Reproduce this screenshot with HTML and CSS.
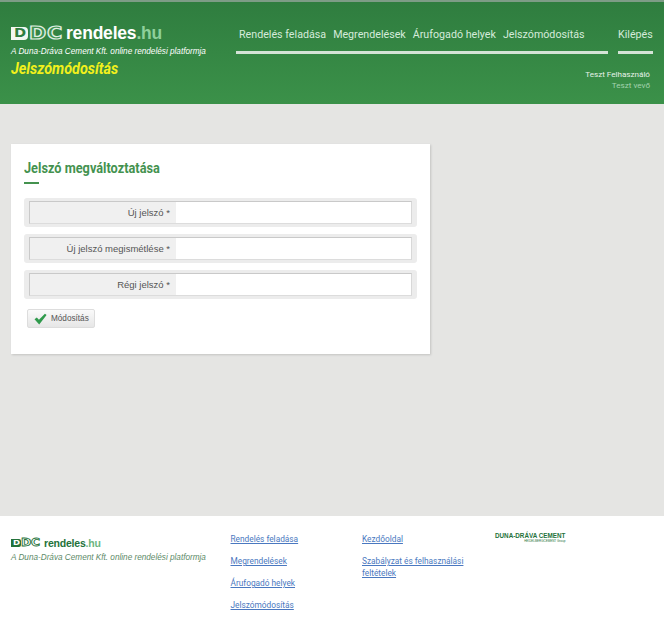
FILE: index.html
```html
<!DOCTYPE html>
<html lang="en">
  <head>
    <meta charset="UTF-8" />
    <meta name="viewport" content="width=device-width, initial-scale=1.0" />
    <title>Jelszómódosítás</title>
    <link rel="stylesheet" href="styles.css">
  </head>
  <body>
    <div class="header">
      <div class="brand">
        <div class="logo">
          <span class="ddc"><span class="ddc-first"><span class="wide">D</span></span><span class="ddc-line wide">D</span><span class="ddc-line wide">C</span></span>
          <span class="logo-name">rendeles<span class="logo-tld">.hu</span></span>
        </div>
        <p class="tagline">A Duna-Dráva Cement Kft. online rendelési platformja</p>
        <h1 class="page-title">Jelszómódosítás</h1>
      </div>
      <div class="header-right">
        <div class="nav">
          <div class="nav-main">
            <a href="#">Rendelés feladása</a>
            <a href="#">Megrendelések</a>
            <a href="#">Árufogadó helyek</a>
            <a href="#">Jelszómódosítás</a>
          </div>
          <div class="nav-exit">
            <a href="#">Kilépés</a>
          </div>
        </div>
        <div class="user">
          <div class="user-name">Teszt Felhasználó</div>
          <div class="user-role">Teszt vevő</div>
        </div>
      </div>
    </div>

    <div class="content">
      <div class="card">
        <h2>Jelszó megváltoztatása</h2>
        <div class="title-rule"></div>
        <div class="field">
          <div class="field-inner">
            <label>Új jelszó *</label>
            <input type="password" />
          </div>
        </div>
        <div class="field">
          <div class="field-inner">
            <label>Új jelszó megismétlése *</label>
            <input type="password" />
          </div>
        </div>
        <div class="field">
          <div class="field-inner">
            <label>Régi jelszó *</label>
            <input type="password" />
          </div>
        </div>
        <button class="submit">
          <svg width="13" height="12" viewBox="0 0 14 13">
            <path d="M0.5 6.8 L3 4.8 L5.3 7.4 L11.8 0.8 L13.6 2.2 L5.6 12.4 Z" fill="#2f9a4c" />
          </svg>
          Módosítás
        </button>
      </div>
    </div>

    <div class="footer">
      <div class="footer-brand">
        <div class="logo logo-small">
          <span class="ddc"><span class="ddc-first"><span class="wide">D</span></span><span class="ddc-line wide">D</span><span class="ddc-line wide">C</span></span>
          <span class="logo-name">rendeles<span class="logo-tld">.hu</span></span>
        </div>
        <p class="tagline">A Duna-Dráva Cement Kft. online rendelési platformja</p>
      </div>
      <ul class="footer-links links-one">
        <li><a href="#">Rendelés feladása</a></li>
        <li><a href="#">Megrendelések</a></li>
        <li><a href="#">Árufogadó helyek</a></li>
        <li><a href="#">Jelszómódosítás</a></li>
      </ul>
      <ul class="footer-links links-two">
        <li><a href="#">Kezdőoldal</a></li>
        <li><a href="#">Szabályzat és felhasználási feltételek</a></li>
      </ul>
      <div class="partner">
        <div class="partner-name">DUNA-DRÁVA CEMENT</div>
        <div class="partner-sub">HEIDELBERGCEMENT Group</div>
      </div>
    </div>
  </body>
</html>
```

FILE: styles.css
```css
body {
  font-family: "Liberation Sans", Arial, sans-serif;
  background-color: #e5e5e3;
  margin: 0;
  padding: 0;
  height: 636px;
  overflow: hidden;
}

.header {
  height: 102px;
  border-top: 2px solid #7d9c86;
  background: linear-gradient(#2f7d3f, #3b9149);
  display: flex;
  justify-content: space-between;
}

.brand {
  padding: 21px 0 0 11px;
}

.logo {
  display: flex;
  align-items: center;
  height: 20px;
  color: white;
}

.ddc {
  display: flex;
  width: 55px;
  flex: none;
  font-family: "DejaVu Sans", sans-serif;
  font-weight: bold;
}

.wide {
  display: inline-block;
  transform: scaleX(1.22);
  transform-origin: left center;
}

.ddc-first {
  background-color: #f2f7f1;
  color: #2f7d3f;
  width: 17px;
  height: 13px;
  line-height: 13px;
  font-size: 12px;
  padding-left: 3px;
  box-sizing: border-box;
  border-radius: 0 4px 4px 0;
}

.ddc-line {
  width: 17px;
  color: #3f9150;
  -webkit-text-stroke: 1.2px #dfeee0;
  font-size: 17px;
  line-height: 13px;
  margin-left: 1px;
}

.logo-name {
  font-weight: bold;
  font-size: 17.5px;
  letter-spacing: -0.2px;
}

.logo-tld {
  color: #8ed09a;
}

.tagline {
  margin: 4px 0 0 0;
  font-size: 8.2px;
  font-style: italic;
  color: white;
  white-space: nowrap;
}

.page-title {
  margin: 3px 0 0 0;
  font-family: Roboto, sans-serif;
  font-size: 16px;
  font-style: italic;
  font-weight: bold;
  color: #f2f01c;
  transform: scaleX(0.9);
  transform-origin: left center;
}

.header-right {
  width: 428px;
}

.nav {
  display: flex;
  justify-content: space-between;
  padding: 26px 11px 0 0;
}

.nav a {
  color: #d5ebdb;
  font-family: Roboto, sans-serif;
  font-size: 10.7px;
  text-decoration: none;
  display: block;
  white-space: nowrap;
}

.nav-main {
  display: flex;
  gap: 7px;
  width: 372px;
  padding: 0 0 10px 3px;
  border-bottom: 3px solid #d4e3d6;
  box-sizing: border-box;
}

.nav-exit {
  width: 35px;
  padding-bottom: 10px;
  border-bottom: 3px solid #d4e3d6;
}

.user {
  margin-top: 15px;
  padding-right: 14px;
  text-align: right;
  font-family: Roboto, sans-serif;
  font-size: 8.1px;
  line-height: 11px;
}

.user-name {
  color: #e6f2e8;
}

.user-role {
  color: #a3d3ae;
}

.content {
  height: 412px;
  padding: 40px 0 0 11px;
  box-sizing: border-box;
}

.card {
  width: 419px;
  height: 210px;
  box-sizing: border-box;
  background-color: white;
  box-shadow: 1px 1px 2px #c4c4c2;
  padding: 15px 13px 0 13px;
}

h2 {
  margin: 0;
  font-family: Roboto, sans-serif;
  font-size: 15px;
  line-height: 18px;
  font-weight: bold;
  color: #44924f;
  transform: scaleX(0.85);
  transform-origin: left center;
}

.title-rule {
  width: 15px;
  height: 2px;
  margin: 5px 0 14px 0;
  background-color: #44924f;
}

.field {
  background-color: #ececec;
  border-radius: 3px;
  padding: 3px 5px;
  margin-bottom: 7px;
  height: 23px;
}

.field-inner {
  display: flex;
  height: 23px;
  border: 1px solid #c9c9c9;
  border-bottom-color: #dcdcdc;
  border-right-color: #d8d8d8;
  box-sizing: border-box;
  background-color: #f0f0f0;
}

label {
  width: 140px;
  padding-right: 6px;
  text-align: right;
  font-size: 9.5px;
  line-height: 21px;
  color: #555;
}

input {
  flex: 1;
  min-width: 0;
  border: none;
  padding: 0;
  background-color: white;
}

.submit {
  display: flex;
  align-items: center;
  gap: 4px;
  width: 68px;
  height: 19px;
  margin: 10px 0 0 3px;
  padding: 0 0 0 6px;
  font-family: "Liberation Sans", Arial, sans-serif;
  font-size: 8.2px;
  color: #555;
  background: linear-gradient(#fafafa, #e6e6e6);
  border: 1px solid #ddd;
  border-radius: 2px;
}

.footer {
  height: 120px;
  background-color: white;
  display: flex;
}

.footer-brand {
  width: 219px;
  padding: 19px 0 0 11px;
  box-sizing: border-box;
}

.logo-small {
  height: 16px;
  color: #24723a;
}

.logo-small .ddc {
  width: 33px;
}

.logo-small .ddc-first {
  background-color: #24723a;
  color: white;
  width: 10px;
  height: 8px;
  line-height: 8px;
  font-size: 7px;
  padding-left: 2px;
  border-radius: 0 2px 2px 0;
}

.logo-small .ddc-line {
  width: 10px;
  color: white;
  -webkit-text-stroke: 0.8px #24723a;
  font-size: 10px;
  line-height: 8px;
  margin-left: 0;
}

.logo-small .logo-name {
  font-size: 10.5px;
  letter-spacing: -0.2px;
}

.logo-small .logo-tld {
  color: #6db57f;
}

.footer-brand .tagline {
  color: #5d8a68;
  margin-top: 2px;
}

.footer-links {
  list-style: none;
  margin: 0;
  padding: 17px 0 0 11.5px;
  font-family: Roboto, sans-serif;
  font-size: 8.3px;
  line-height: 12px;
}

.footer-links li {
  margin-bottom: 10px;
}

.footer-links a {
  color: #4a78c0;
}

.links-one {
  width: 120px;
}

.links-two {
  width: 120px;
}

.partner {
  padding: 16px 0 0 13px;
  color: #24723a;
  font-family: "Liberation Sans", Arial, sans-serif;
}

.partner-name {
  font-size: 6.3px;
  line-height: 7px;
  font-weight: bold;
  white-space: nowrap;
}

.partner-sub {
  font-size: 3px;
  line-height: 4px;
  text-align: right;
}
```
